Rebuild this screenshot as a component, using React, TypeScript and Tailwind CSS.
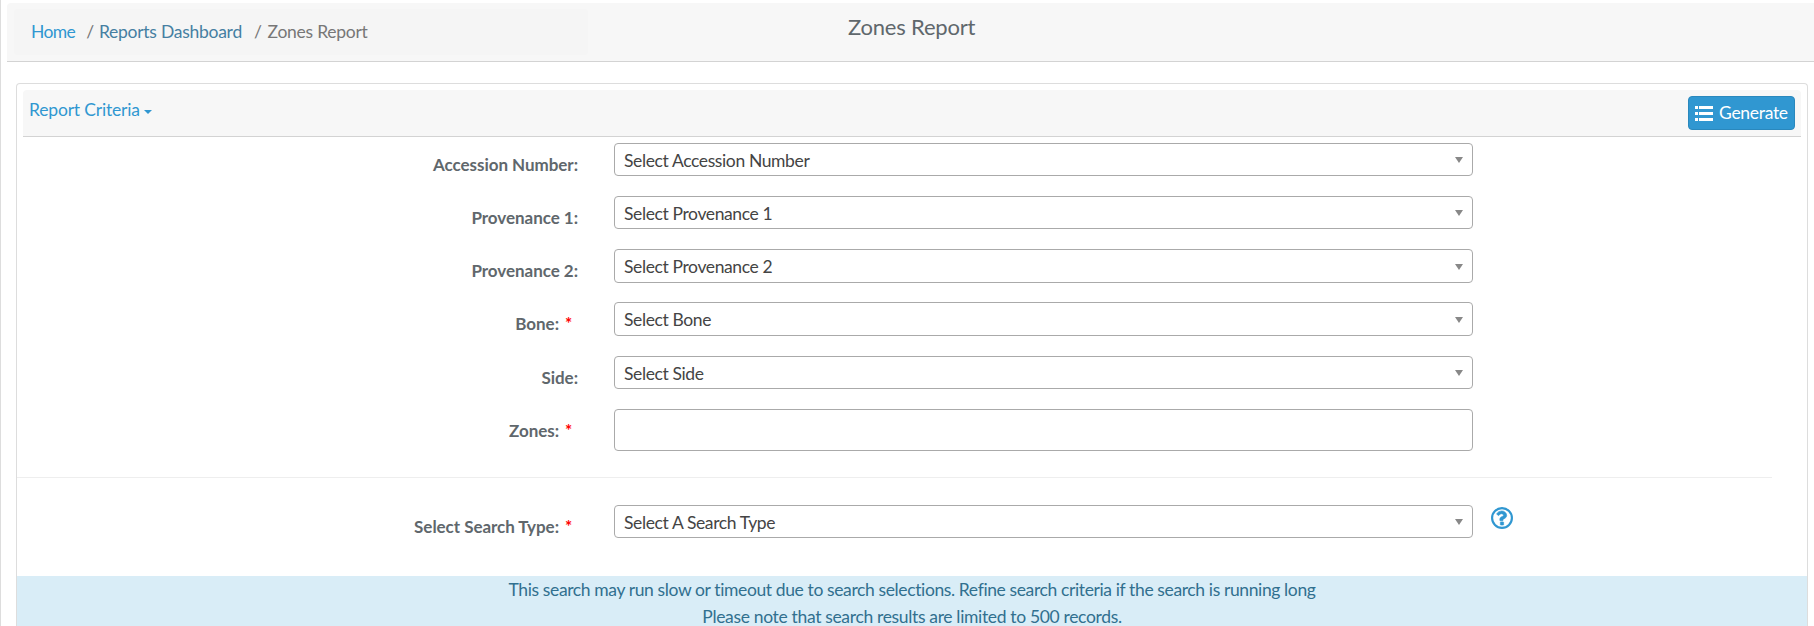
import { type ReactNode } from "react";

function Label({ text, required }: { text: string; required?: boolean }) {
  return (
    <label className="flex w-[561px] shrink-0 justify-end pt-[9px] text-[17px] leading-[26px] font-bold tracking-[-0.04px] text-[#60676c]">
      {text}
      {required && <span className="mr-[6px] ml-[6px] w-[7px] text-center text-[#ff0000]">*</span>}
    </label>
  );
}

function Select({ text, tall }: { text: string; tall?: boolean }) {
  return (
    <button
      className={
        tall
          ? "flex h-[34px] w-[859px] items-start justify-between rounded border border-[#aaa] bg-white pr-2 pl-[9px] text-[#444]"
          : "flex h-[33px] w-[859px] items-start justify-between rounded border border-[#aaa] bg-white pr-2 pl-[9px] text-[#444]"
      }
    >
      <span className="pt-[2px] leading-[29px]">{text}</span>
      <svg width="8" height="6" viewBox="0 0 8 6" className={tall ? "mt-[14px] mr-[1px]" : "mt-[13px] mr-[1px]"}>
        <path d="M0 0h8L4 6z" fill="#888" />
      </svg>
    </button>
  );
}

function Row({ label, required, children, className }: { label: string; required?: boolean; children: ReactNode; className: string }) {
  return (
    <div className={className}>
      <Label text={label} required={required} />
      <div className="ml-9 flex items-start">{children}</div>
    </div>
  );
}

export default function App() {
  return (
    <div className="flex h-[626px] flex-col overflow-hidden border-l border-[#ddd] bg-white pt-[3px] font-['Lato',sans-serif] text-[17.5px] leading-[27px] tracking-[-0.38px] text-[#60676c] [font-variant-ligatures:none]">
      <header className="ml-[6px] flex h-[59px] shrink-0 items-start rounded-tl border-b border-[#d3d3d3] bg-[#f7f7f7] pt-[6px] pl-[7px]">
        <nav className="flex h-[46px] w-[574px] items-center rounded bg-[#f5f5f5] pb-[2px] pl-[17px] tracking-[-0.26px]">
          <a className="tracking-[-0.6px] text-[#3097d1]">Home</a>
          <span className="pr-[5px] pl-[11px] text-[#777]">/</span>
          <a className="text-[#457fa2]">Reports Dashboard</a>
          <span className="pr-[6px] pl-[12px] text-[#777]">/</span>
          <span className="text-[#777]">Zones Report</span>
        </nav>
        <h1 className="ml-[260px] pt-[4px] text-[22px] leading-[27px] tracking-[-0.2px]">Zones Report</h1>
      </header>
      <section className="mt-[21px] mr-[6px] ml-[15px] flex flex-1 flex-col rounded-t border border-b-0 border-[#ddd]">
        <div className="mx-[6px] mt-[6px] flex h-[47px] shrink-0 justify-between rounded-t border-b border-[#d3d3d3] bg-[#f7f7f7] pr-[6px] pl-[6px]">
          <a className="flex items-center self-start pt-[6px] tracking-[-0.18px] text-[#3097d1]">
            Report Criteria
            <svg width="8" height="4" viewBox="0 0 8 4" className="mt-[4px] ml-[4px]">
              <path d="M0 0h8L4 4z" fill="#3097d1" />
            </svg>
          </a>
          <button className="mt-[6px] flex h-[34px] w-[107px] items-center rounded border border-[#2a88bd] bg-[#3097d1] pl-[6px] tracking-[-0.3px] text-white">
            <svg width="18" height="15" viewBox="0 0 18 15" fill="currentColor" className="mr-[6px]">
              <path d="M0 0h3v3H0zM0 6h3v3H0zM0 12h3v3H0zM4 0h14v3H4zM4 6h14v3H4zM4 12h14v3H4z" />
            </svg>
            <span className="pb-[2px]">Generate</span>
          </button>
        </div>
        <Row label="Accession Number:" className="mt-[6px] flex h-[53px]"><Select text="Select Accession Number" /></Row>
        <Row label="Provenance 1:" className="flex h-[53px]"><Select text="Select Provenance 1" /></Row>
        <Row label="Provenance 2:" className="flex h-[53px]"><Select text="Select Provenance 2" tall /></Row>
        <Row label="Bone:" required className="flex h-[54px]"><Select text="Select Bone" tall /></Row>
        <Row label="Side:" className="flex h-[53px]"><Select text="Select Side" /></Row>
        <Row label="Zones:" required className="flex h-[68px]">
          <div className="h-[42px] w-[859px] rounded border border-[#aaa]" />
        </Row>
        <hr className="mr-[35px] border-[#eee]" />
        <Row label="Select Search Type:" required className="mt-[27px] flex h-[71px]">
          <Select text="Select A Search Type" />
          <svg width="22" height="22" viewBox="0 0 1536 1536" className="mt-[2px] ml-[18px]" fill="#3097d1">
            <circle cx="768" cy="768" r="692" fill="none" stroke="#3097d1" strokeWidth="150" />
            <path stroke="#3097d1" strokeWidth="40" d="M880 1072v160q0 14-9 23t-23 9h-160q-14 0-23-9t-9-23v-160q0-14 9-23t23-9h160q14 0 23 9t9 23zm216-496q0 50-15 90t-45.500 69-52 44-59.500 36q-32 18-46.500 28t-26 24-11.500 29v32q0 14-9 23t-23 9h-160q-14 0-23-9t-9-23v-68q0-35 10.500-64.500t24-47.500 39-35.500 41-25.500 44.500-21q53-25 75-43t22-49q0-42-43.500-71.500t-95.500-29.500q-56 0-95 27-29 20-80 83-9 12-25 12-11 0-19-6l-108-82q-10-7-12-20t5-23q122-192 349-192 129 0 238.500 89.500t109.500 214.500z" />
          </svg>
        </Row>
        <div className="flex-1 bg-[#d9edf7] text-center text-[#31708f]">
          <p>This search may run slow or timeout due to search selections. Refine search criteria if the search is running long</p>
          <p className="tracking-[-0.34px]">Please note that search results are limited to 500 records.</p>
        </div>
      </section>
    </div>
  );
}
